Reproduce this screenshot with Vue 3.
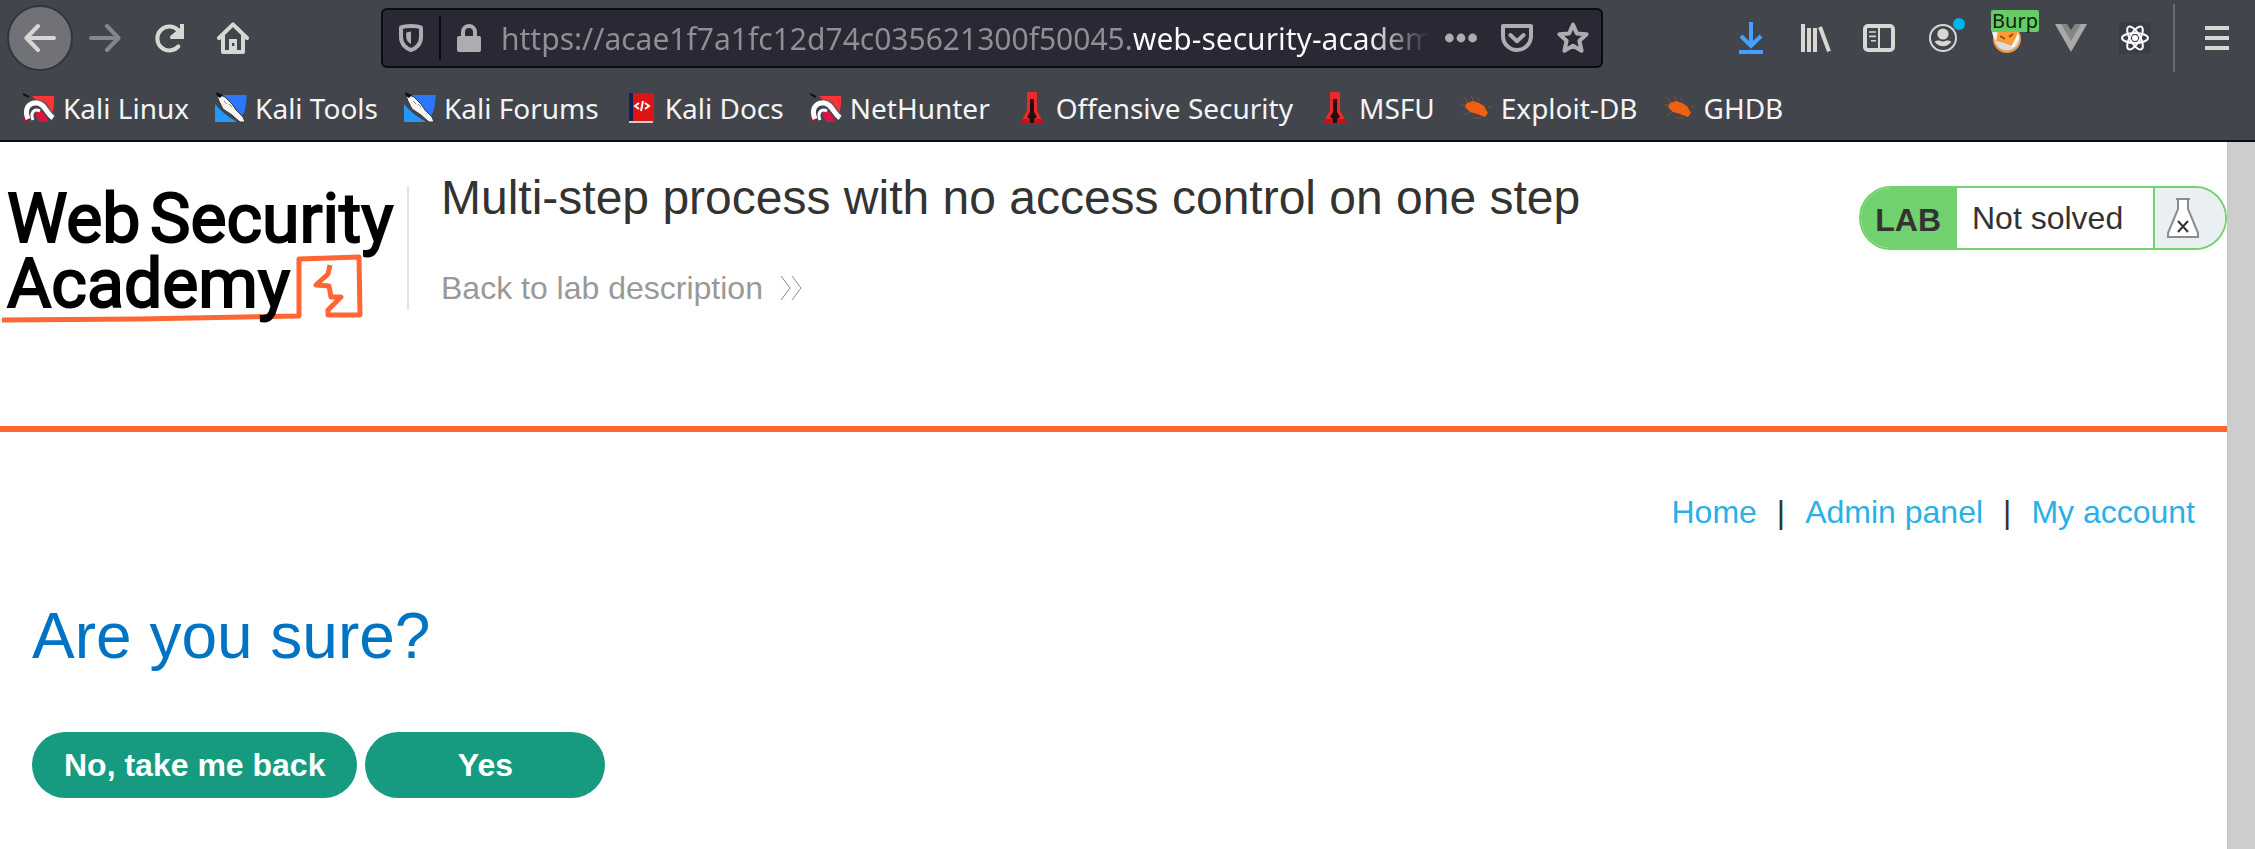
<script setup>
import { ref } from 'vue'

const address = ref('https://acae1f7a1fc12d74c035621300f50045.web-security-academy.net/admin-roles')

const bookmarks = [
  { label: 'Kali Linux', icon: 'dragon' },
  { label: 'Kali Tools', icon: 'knife' },
  { label: 'Kali Forums', icon: 'knife' },
  { label: 'Kali Docs', icon: 'book' },
  { label: 'NetHunter', icon: 'dragon' },
  { label: 'Offensive Security', icon: 'tower' },
  { label: 'MSFU', icon: 'tower' },
  { label: 'Exploit-DB', icon: 'bug' },
  { label: 'GHDB', icon: 'bug' },
]

const links = ['Home', 'Admin panel', 'My account']
</script>

<template>
  <div class="window">
    <header class="chrome">
      <div class="toolbar">
        <button class="tool back" aria-label="Back">
          <svg viewBox="0 0 16 16"><path d="M15 8H1.5M7 2L1.200 8L7 14" class="line" /></svg>
        </button>
        <button class="tool forward" aria-label="Forward" disabled>
          <svg viewBox="0 0 16 16"><path d="M1 8H14.500M9 2L14.800 8L9 14" class="line" /></svg>
        </button>
        <button class="tool" aria-label="Reload">
          <svg viewBox="0 0 16 16">
            <path d="M12.700 12.200A6 6 0 1 1 12.600 4.200" class="line" />
            <path d="M15.500 1V8.500H8.600V7L13.500 3V1Z" fill="currentColor" />
          </svg>
        </button>
        <button class="tool" aria-label="Home">
          <svg viewBox="0 0 16 16">
            <path d="M1 8L8 1.200L15 8" class="line" />
            <path d="M3 7V15H13V7" class="line" />
            <path d="M6 15V8.500H10V15Z" fill="currentColor" />
            <path d="M7.500 10.500H8.700V12H7.500Z" fill="#42454c" />
          </svg>
        </button>

        <div class="urlbar">
          <button class="small" aria-label="Tracking protection">
            <svg viewBox="0 0 16 16">
              <path d="M8 2C10 2 12 2.300 13 2.800V7.500C13 11 10.500 13.300 8 14C5.500 13.300 3 11 3 7.500V2.800C4 2.300 6 2 8 2Z" class="line" />
              <path d="M8 4.800V11C6.300 10 5.600 9 5.600 7V5.200Z" fill="currentColor" />
            </svg>
          </button>
          <span class="rule"></span>
          <button class="small" aria-label="Connection security">
            <svg viewBox="0 0 16 16">
              <path d="M5 8V5A3 3 0 0 1 11 5V8" class="line" />
              <rect x="2" y="7" width="12" height="8" rx="1" fill="currentColor" />
            </svg>
          </button>
          <input v-model="address" class="address" type="text" aria-label="Address" spellcheck="false" />
          <button class="small wide" aria-label="Page actions">
            <svg viewBox="0 0 16 16">
              <circle cx="2.200" cy="8" r="2.200" fill="currentColor" />
              <circle cx="8" cy="8" r="2.200" fill="currentColor" />
              <circle cx="13.800" cy="8" r="2.200" fill="currentColor" />
            </svg>
          </button>
          <button class="small wide" aria-label="Save to Pocket">
            <svg viewBox="0 0 16 16">
              <path d="M1 2H15V7A7 7 0 0 1 1 7Z" class="line" />
              <path d="M4.700 6.500L8 9.600L11.300 6.500" class="line" />
            </svg>
          </button>
          <button class="small wide" aria-label="Bookmark this page">
            <svg viewBox="0 0 16 16">
              <path d="M8 1.300L9.900 5.700L14.800 6.100L11.200 9.400L12.300 14.400L8 11.900L3.700 14.400L4.800 9.400L1.200 6.100L6.100 5.700Z" class="line" />
            </svg>
          </button>
        </div>

        <button class="tool download" aria-label="Downloads">
          <svg viewBox="0 0 16 16"><path d="M8 0V12M3 7L8 12L13 7M2 15H14" class="thick" /></svg>
        </button>
        <button class="tool" aria-label="Library">
          <svg viewBox="0 0 16 16"><path d="M2 1V15M5 3V15M8 3V15M10.500 2.500L15 14.700" class="thick" /></svg>
        </button>
        <button class="tool" aria-label="Sidebars">
          <svg viewBox="0 0 16 16">
            <rect x="1" y="2" width="14" height="12" rx="1.500" class="line" />
            <path d="M8 2V14" stroke="currentColor" />
            <path d="M3 5H6.500M3 7.200H6.500M4 9.400H6.500" stroke="currentColor" stroke-width="0.800" />
          </svg>
        </button>
        <button class="tool" aria-label="Account">
          <svg viewBox="0 0 16 16">
            <circle cx="8" cy="8" r="6.500" fill="none" stroke="currentColor" />
            <circle cx="8" cy="6" r="2.800" fill="currentColor" />
            <path d="M3.800 9.800Q5 9 6.300 9.300Q8 10.200 9.700 9.300Q11 9 12.200 9.800A5 5 0 0 1 3.800 9.800Z" fill="currentColor" />
          </svg>
          <span class="notice"></span>
        </button>
        <button class="tool" aria-label="FoxyProxy">
          <svg viewBox="0 0 32 32">
            <circle cx="16" cy="17" r="14" fill="#e8984e" />
            <circle cx="16" cy="16" r="12.500" fill="#dcdcdc" />
            <path d="M1 8L7 12L5 19Q1 14 1 8Z" fill="#f4f4f4" />
            <path d="M7 9H27L25 16L21 24L10 20L5 19Z" fill="#ff9a35" />
            <path d="M9 14L14 17M18 15L22 12" stroke="#8f5218" stroke-width="2" />
            <path d="M27 12L28 15L23 25L20 25Z" fill="#fff" />
          </svg>
          <span class="badge">Burp</span>
        </button>
        <button class="tool" aria-label="Vue.js devtools">
          <svg viewBox="0 0 32 32">
            <path d="M0 2H32L16 30Z" fill="#a9a9a9" />
            <path d="M6 2H26L16 19Z" fill="#858585" />
            <path d="M12 2H20L16 8Z" fill="#42454c" />
          </svg>
        </button>
        <button class="tool" aria-label="React Developer Tools">
          <svg viewBox="0 0 32 32">
            <rect width="32" height="32" fill="#3b3c45" />
            <g fill="none" stroke="#fff" stroke-width="2">
              <ellipse cx="16" cy="16" rx="13" ry="5" />
              <ellipse cx="16" cy="16" rx="13" ry="5" transform="rotate(60 16 16)" />
              <ellipse cx="16" cy="16" rx="13" ry="5" transform="rotate(120 16 16)" />
            </g>
            <circle cx="16" cy="16" r="3" fill="#fff" />
          </svg>
        </button>
        <span class="divider"></span>
        <button class="tool menu" aria-label="Open menu">
          <svg viewBox="0 0 16 16"><path d="M2 3H14M2 8H14M2 13H14" class="thick" /></svg>
        </button>
      </div>

      <nav class="bookmarks" aria-label="Bookmarks">
        <a v-for="b in bookmarks" :key="b.label" href="#">
          <svg v-if="b.icon === 'dragon'" viewBox="0 0 32 32">
            <path d="M9 4H31Q32 15 28 24L14 9Z" fill="#fd3338" />
            <path d="M13 17Q20 17 26 30H17Q11 24 13 17Z" fill="#d81643" />
            <path d="M0 22L8 30H1Z" fill="#b01238" />
            <path d="M6 12C14 6 22 8 25 15L31 24" fill="none" stroke="#77555c" stroke-width="2" />
            <path d="M5 27C1 18 5 10 14 11C22 12 23 21 30 26" fill="none" stroke="#fff" stroke-width="5" />
            <path d="M10 28C7 21 11 16 17 19" fill="none" stroke="#fff" stroke-width="3" />
            <path d="M0 2L6 5" stroke="#111" stroke-width="2" />
          </svg>
          <svg v-else-if="b.icon === 'knife'" viewBox="0 0 32 32">
            <path d="M8 3H32L30 18L27 24Z" fill="#2b78ff" />
            <path d="M0 12Q8 22 22 30H0Z" fill="#2398fb" />
            <path d="M1 1L10 5L17 12L21 18L28 25L30 30H25L17 23L8 17L4 9Z" fill="#f5f5f5" stroke="#37373c" />
            <path d="M1 0L8 3L5 6L2 4Z" fill="#111" />
            <path d="M9 9L12 12M14 12L17 15" stroke="#888" />
          </svg>
          <svg v-else-if="b.icon === 'book'" viewBox="0 0 32 32">
            <path d="M4 1H29V29H4Z" fill="#db1414" />
            <path d="M4 1H8V29H4Z" fill="#17214f" />
            <path d="M4 29H28V31H4Z" fill="#d4cccc" />
            <path d="M14 11L10 14L14 17M20 11L24 14L20 17M18 9L16 19" fill="none" stroke="#fff" stroke-width="2" />
          </svg>
          <svg v-else-if="b.icon === 'tower'" viewBox="0 0 32 32">
            <path d="M11 0H21V18L28 32H4L11 18Z" fill="#ea292d" />
            <path d="M6 27L4 32H28L26 27Z" fill="#bd1519" />
            <path d="M14 7H18V20L21 25L18 27V31H14V27L11 25L14 20Z" fill="#250c0e" />
          </svg>
          <svg v-else viewBox="0 0 32 32">
            <path d="M3 5L8 12M10 4L13 9M17 6L18 9M0 13H6M2 24L8 20M12 26H20M27 15H31" stroke="#8a4f33" stroke-width="1" />
            <path d="M4 15L6 11L12 9L18 11L23 14L27 21L24 25L16 22L9 20Z" fill="#ef6010" />
          </svg>
          <span>{{ b.label }}</span>
        </a>
      </nav>
    </header>

    <div class="viewport">
      <main class="page">
        <section class="lab-header">
          <a href="#" class="logo" aria-label="Web Security Academy">
            <svg viewBox="0 0 400 144">
              <text x="7" y="56">Web</text>
              <text x="150" y="56">Security</text>
              <path d="M2 134L140 133L299 130V73L359 71L360 129H328V124L341 111H331L329 100L316 99L328 88L330 79" class="mark" />
              <text x="7" y="121">Academy</text>
            </svg>
          </a>
          <div class="titles">
            <h2>Multi-step process with no access control on one step</h2>
            <a href="#" class="description">
              Back to lab description
              <svg viewBox="0 0 24 24"><path d="M2 0L11 12L2 24M13 0L22 12L13 24" /></svg>
            </a>
          </div>
          <div class="status">
            <strong>LAB</strong>
            <span class="state">Not solved</span>
            <span class="flask">
              <svg viewBox="0 0 32 40">
                <path d="M11 1V11L1 35V39H31V35L21 11V1" fill="#fff" stroke="#8a8c8d" stroke-width="2" />
                <path d="M9 1H23" stroke="#8a8c8d" stroke-width="2" />
                <path d="M11 23L21 34M21 23L11 34" stroke="#333" stroke-width="2" />
              </svg>
            </span>
          </div>
        </section>

        <section class="body">
          <nav class="account" aria-label="Account">
            <template v-for="(l, i) in links" :key="l">
              <span v-if="i">|</span>
              <a href="#">{{ l }}</a>
            </template>
          </nav>
          <h1>Are you sure?</h1>
          <form class="actions" @submit.prevent>
            <button type="button">No, take me back</button>
            <button type="submit">Yes</button>
          </form>
        </section>
      </main>
      <div class="scrollbar"></div>
    </div>
  </div>
</template>

<style>
body {
  margin: 0;
}
</style>

<style scoped>
* {
  box-sizing: border-box;
}
.window {
  display: flex;
  flex-direction: column;
  min-height: 100vh;
  font-family: "Liberation Sans", Arial, sans-serif;
  font-size: 32px;
  color: #333332;
  background: #fff;
}
svg {
  display: block;
  flex: none;
}
button {
  font: inherit;
  border: 0;
}
a {
  text-decoration: none;
}
.line,
.thick {
  fill: none;
  stroke: currentColor;
  stroke-width: 2;
}
.line {
  stroke-linecap: round;
  stroke-linejoin: round;
}

.chrome {
  background: #42454c;
  border-bottom: 2px solid #0c0c12;
  font-family: "Noto Sans", sans-serif;
  font-size: 28px;
}
.toolbar {
  display: flex;
  align-items: center;
  height: 76px;
  padding-left: 7px;
}
.tool {
  position: relative;
  display: flex;
  align-items: center;
  justify-content: center;
  flex: none;
  width: 64px;
  height: 68px;
  padding: 0;
  color: #d7d7d4;
  background: none;
}
.tool svg,
.bookmarks svg {
  width: 32px;
  height: 32px;
}
.back {
  width: 66px;
  height: 66px;
  background: #717278;
  border: 2px solid #33353b;
  border-radius: 50%;
}
.forward {
  color: #85868a;
}
.download {
  color: #45a1ff;
}
.menu {
  width: 80px;
  padding-left: 4px;
}
.divider {
  width: 2px;
  height: 68px;
  margin-left: 6px;
  background: #6b6c71;
}
.notice {
  position: absolute;
  top: 14px;
  right: 10px;
  width: 12px;
  height: 12px;
  border-radius: 50%;
  background: #00b3f4;
}
.badge {
  position: absolute;
  top: 6px;
  left: 16px;
  width: 48px;
  height: 22px;
  border-radius: 2px;
  background: #66cc66;
  color: #10200f;
  font-size: 20px;
  line-height: 22px;
}
.urlbar {
  display: flex;
  align-items: center;
  flex: 1;
  min-width: 0;
  height: 60px;
  margin: 0 116px;
  padding-left: 8px;
  border: 2px solid #0c0c0d;
  border-radius: 6px;
  background: #282934;
}
.small {
  display: flex;
  align-items: center;
  justify-content: center;
  flex: none;
  width: 40px;
  height: 44px;
  padding: 0;
  background: none;
  color: #adadb1;
}
.small svg {
  width: 32px;
  height: 32px;
}
.wide {
  width: 56px;
}
.rule {
  width: 2px;
  height: 44px;
  margin: 0 8px;
  background: #0c0c0d;
}
.address {
  flex: 1;
  min-width: 0;
  height: 44px;
  margin-left: 12px;
  padding: 0;
  border: 0;
  outline: 0;
  font: inherit;
  font-size: 30px;
  color: transparent;
  background: linear-gradient(90deg, #8f9095 632px, #f9f9fa 632px);
  background-clip: text;
  -webkit-mask-image: linear-gradient(270deg, transparent 4px, #000 64px);
  mask-image: linear-gradient(270deg, transparent 4px, #000 64px);
}
.bookmarks {
  display: flex;
  align-items: center;
  gap: 26px;
  height: 64px;
  padding: 0 23px;
}
.bookmarks a {
  display: flex;
  align-items: center;
  gap: 8px;
  color: #f4f4f5;
  white-space: nowrap;
}

.viewport {
  display: flex;
  flex: 1;
}
.page {
  flex: 1;
  min-width: 0;
}
.scrollbar {
  width: 28px;
  background: #cdcdcd;
  border-left: 1px solid #c8c4c0;
}
.lab-header {
  display: flex;
  align-items: flex-start;
  height: 290px;
  padding-top: 44px;
  border-bottom: 6px solid #ff6633;
}
.logo {
  flex: none;
  width: 409px;
  height: 124px;
  border-right: 2px solid #e3e3e3;
}
.logo svg {
  width: 400px;
  height: 144px;
  overflow: visible;
}
.logo text {
  font-family: Roboto, sans-serif;
  font-size: 68px;
  fill: #000;
  stroke: #000;
  stroke-width: 2;
}
.mark {
  fill: none;
  stroke: #ff6633;
  stroke-width: 5;
  stroke-linejoin: round;
}
.titles {
  flex: 1;
  padding-left: 32px;
}
h1,
h2 {
  margin: 0;
  font-weight: 400;
}
h2 {
  margin-top: -16px;
  font-size: 48px;
  line-height: 56px;
}
.description {
  display: flex;
  align-items: center;
  gap: 16px;
  margin-top: 44px;
  line-height: 36px;
  color: #999;
}
.description svg {
  width: 24px;
  height: 24px;
  fill: none;
  stroke: #888;
}
.status {
  display: flex;
  flex: none;
  height: 64px;
  line-height: 60px;
  border: 2px solid #71d16e;
  border-radius: 32px;
  overflow: hidden;
}
.status strong {
  padding: 2px 16px 0 14px;
  background: #71d16e;
}
.state {
  width: 196px;
  padding-left: 15px;
}
.flask {
  display: flex;
  align-items: center;
  width: 72px;
  padding-left: 12px;
  border-left: 2px solid #71d16e;
  background: #eaeff2;
}
.flask svg {
  width: 32px;
  height: 40px;
}
.body {
  padding: 62px 32px 32px;
}
.account {
  display: flex;
  justify-content: flex-end;
  gap: 20px;
  line-height: 36px;
}
.account a {
  color: #29b0e8;
}
h1 {
  margin-top: 70px;
  font-size: 64px;
  line-height: 72px;
  color: #0074c4;
}
.actions {
  display: flex;
  gap: 8px;
  margin-top: 60px;
}
.actions button {
  min-width: 240px;
  height: 66px;
  padding: 0 32px;
  border-radius: 33px;
  background: #169b80;
  color: #fff;
  font-weight: 700;
}
</style>
